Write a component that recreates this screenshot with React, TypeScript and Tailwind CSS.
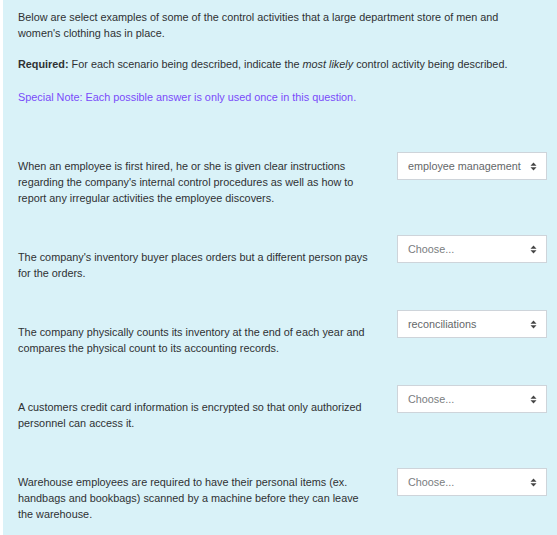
// Each scenario keeps the line breaks of the source question text.
const ROWS: { lines: string[]; value: string }[] = [
  {
    lines: [
      "When an employee is first hired, he or she is given clear instructions",
      "regarding the company's internal control procedures as well as how to",
      "report any irregular activities the employee discovers.",
    ],
    value: "employee management",
  },
  {
    lines: ["The company's inventory buyer places orders but a different person pays", "for the orders."],
    value: "",
  },
  {
    lines: [
      "The company physically counts its inventory at the end of each year and",
      "compares the physical count to its accounting records.",
    ],
    value: "reconciliations",
  },
  {
    lines: ["A customers credit card information is encrypted so that only authorized", "personnel can access it."],
    value: "",
  },
  {
    lines: [
      "Warehouse employees are required to have their personal items (ex.",
      "handbags and bookbags) scanned by a machine before they can leave",
      "the warehouse.",
    ],
    value: "",
  },
];

function SortArrows() {
  return (
    <svg width="7" height="9" viewBox="0 0 7 9" className="shrink-0">
      <path d="M3.5 0.5 L6.5 3.8 L0.5 3.8 Z" fill="#444" />
      <path d="M3.5 8.5 L6.5 5.2 L0.5 5.2 Z" fill="#444" />
    </svg>
  );
}

function FakeSelect({ value }: { value: string }) {
  return (
    <div className="flex h-[28px] w-[150px] shrink-0 items-center justify-between border border-[#ced4da] bg-white pl-[10px] pr-[9px]">
      <span className={value ? "text-[10.8px] text-[#646769]" : "text-[10.8px] text-[#7a7d80]"}>
        {value || "Choose..."}
      </span>
      <SortArrows />
    </div>
  );
}

export default function App() {
  return (
    <div className="min-h-[535px] bg-white pl-[3px] font-['Liberation_Sans',Arial,sans-serif]">
      <div className="min-h-[535px] bg-[#d9f2f8] pl-[15px] pr-[10px] pt-[9px] text-[10.85px] leading-[16px] text-[#2f3133]">
        <p className="whitespace-nowrap">
          Below are select examples of some of the control activities that a large department store of men and
          <br />
          women's clothing has in place.
        </p>
        <p className="mt-[15px] whitespace-nowrap">
          <strong>Required:</strong> For each scenario being described, indicate the <em>most likely</em> control
          activity being described.
        </p>
        <p className="mt-[17px] text-[#7a4bfa]">Special Note: Each possible answer is only used once in this question.</p>

        <div className="mt-[21px] flex flex-col gap-[11px]">
          {ROWS.map((row) => (
            <div key={row.lines[0]} className="flex items-center">
              <p className="w-[379px] shrink-0 whitespace-nowrap pt-[32px]">
                {row.lines.map((line, i) => (
                  <span key={i}>
                    {i > 0 && <br />}
                    {line}
                  </span>
                ))}
              </p>
              <FakeSelect value={row.value} />
            </div>
          ))}
        </div>
      </div>
    </div>
  );
}
